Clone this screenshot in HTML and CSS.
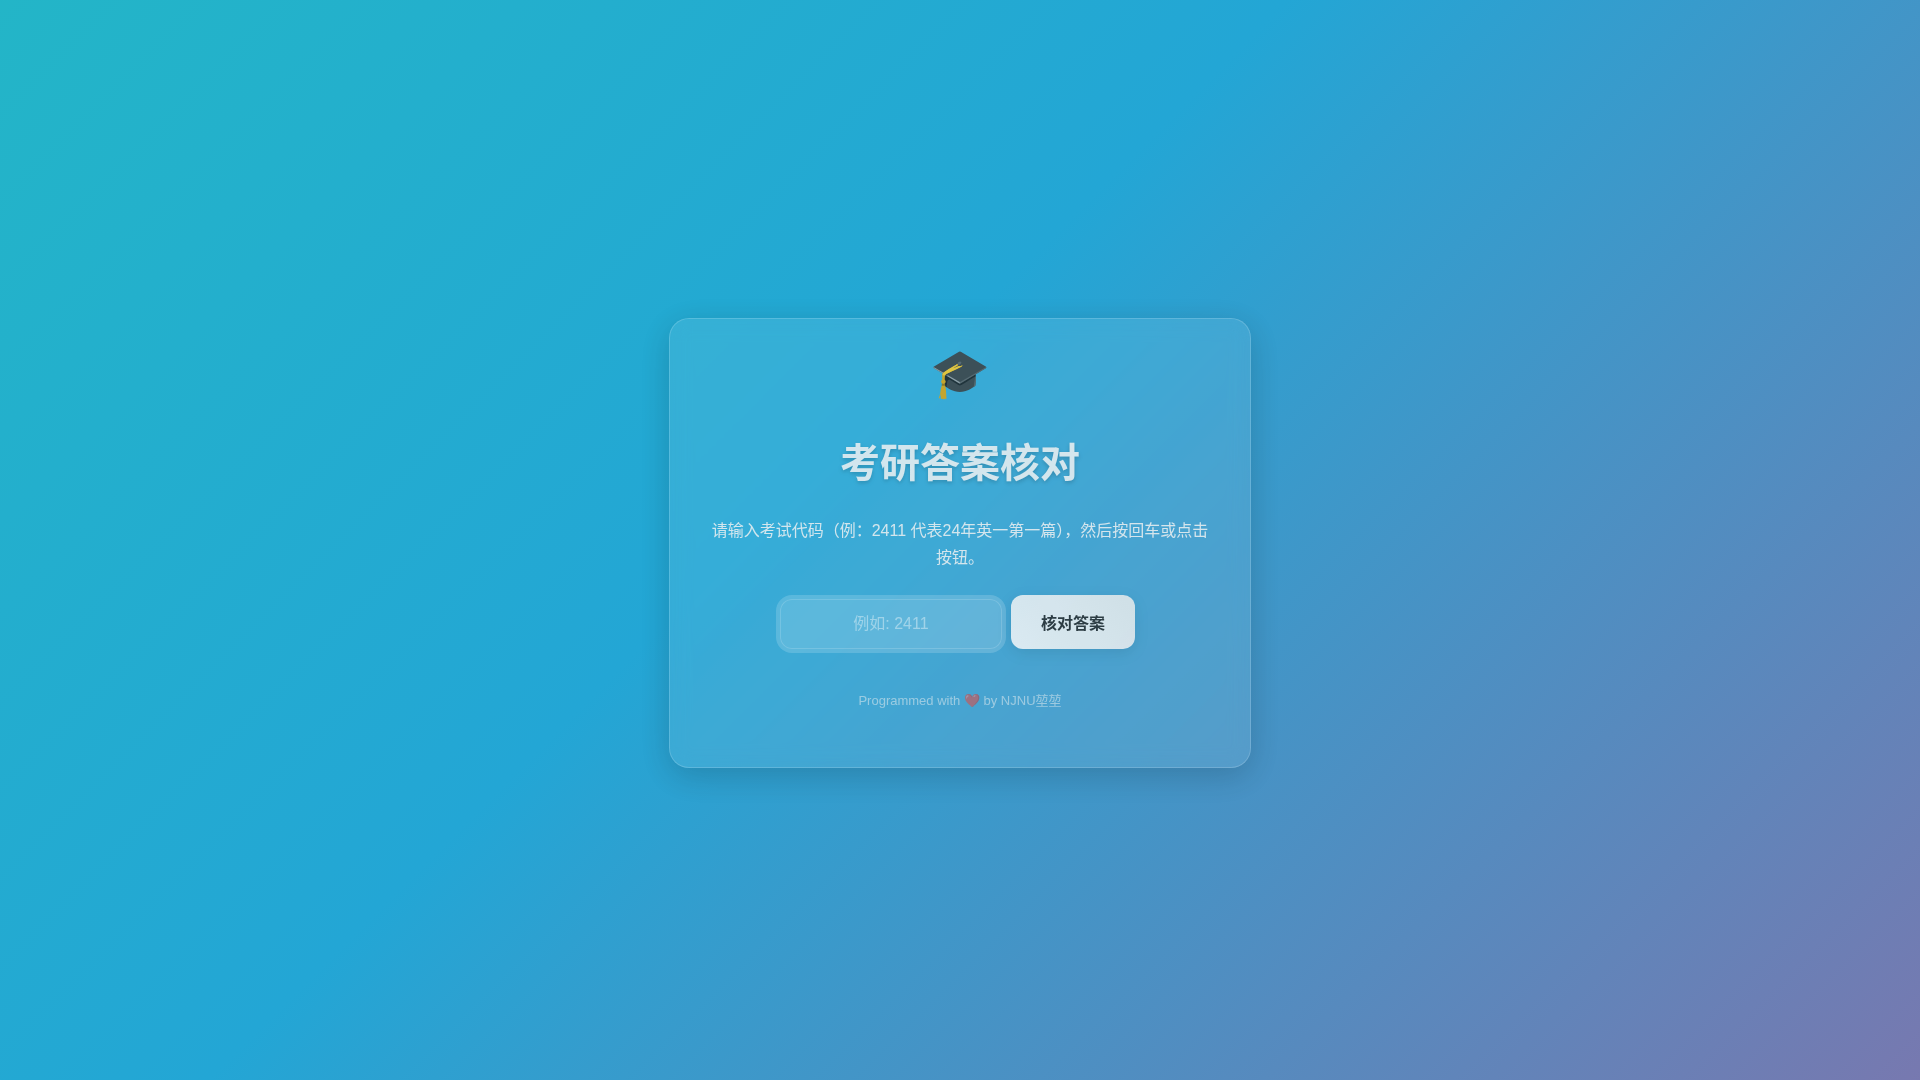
FILE: index.html
```html
<!DOCTYPE html>
<html lang="zh-CN">
<head>
    <meta charset="UTF-8">
    <meta name="viewport" content="width=device-width, initial-scale=1.0">
    <title>考研答案核对</title>
    <link rel="stylesheet" href="styles.css">
</head>
<body>
    <main class="container">
        <div class="logo">🎓</div>
        <h1>考研答案核对</h1>
        <label class="hint" for="examCode">请输入考试代码（例：2411 代表24年英一第一篇），然后按回车或点击按钮。</label>
        <form class="code-form">
            <input type="text" id="examCode" class="code-input" placeholder="例如: 2411" autocomplete="off">
            <button type="submit" class="btn">核对答案</button>
        </form>
        <footer class="footer">Programmed with ❤️ by NJNU堃堃</footer>
    </main>
</body>
</html>
```

FILE: styles.css
```css
* {
    box-sizing: border-box;
}

body {
    display: flex;
    align-items: center;
    justify-content: center;
    min-height: 100vh;
    margin: 0;
    padding: 5px 20px 0;
    background: linear-gradient(-45deg, #ee7752, #e73c7e, #23a6d5, #23d5ab);
    background-size: 400% 400%;
    background-position: 19% 50%;
    color: #f2f2f2;
    font-family: "Liberation Sans", "Noto Sans CJK SC", sans-serif;
    font-size: 16px;
    text-align: center;
}

.container {
    width: 100%;
    max-width: 582px;
    padding: 23px 40px 56px;
    background: rgba(255, 255, 255, 0.1);
    backdrop-filter: blur(10px);
    border: 1px solid rgba(255, 255, 255, 0.2);
    border-radius: 20px;
    box-shadow: 0 8px 32px rgba(0, 0, 0, 0.2);
    opacity: 0.85;
}

.logo {
    font-size: 48px;
    line-height: 64px;
}

h1 {
    margin: 25px 0 22px;
    font-size: 40px;
    line-height: 64px;
    text-shadow: 0 2px 4px rgba(0, 0, 0, 0.2);
}

.hint {
    display: block;
    margin-bottom: 24px;
    line-height: 27px;
}

.code-form {
    display: flex;
    align-items: flex-end;
    justify-content: center;
    gap: 4px;
}

.code-input {
    width: 222px;
    height: 50px;
    padding: 0 20px;
    background: rgba(255, 255, 255, 0.2);
    border: 1px solid rgba(255, 255, 255, 0.2);
    border-radius: 12px;
    box-shadow: 0 0 0 4px rgba(255, 255, 255, 0.2);
    outline: none;
    color: #fff;
    font-family: inherit;
    font-size: 16px;
    text-align: center;
}

.code-input::placeholder {
    color: rgba(255, 255, 255, 0.5);
}

.btn {
    height: 54px;
    margin: 0 5px;
    padding: 0 30px;
    background: linear-gradient(45deg, #f8f8f8, #ececec);
    border: none;
    border-radius: 12px;
    box-shadow: 0 4px 15px rgba(0, 0, 0, 0.1);
    color: #2c2c2c;
    cursor: pointer;
    font-family: inherit;
    font-size: 16px;
    font-weight: bold;
}

.footer {
    margin-top: 42px;
    font-size: 13px;
    line-height: 20px;
    opacity: 0.6;
}
```
